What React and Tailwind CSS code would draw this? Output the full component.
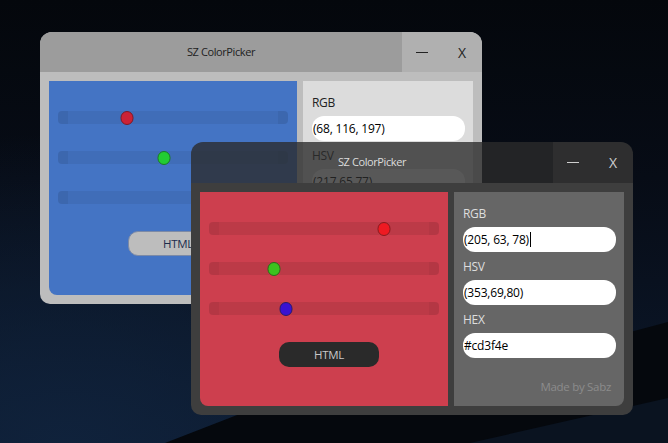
import React from "react";

// one slider groove with its knob; left = knob centre in px from groove start
function Slider({ left, groove, cap, knob }) {
  return (
    <div className={`relative h-[13px] rounded-[4px] flex justify-between ${groove}`}>
      <div className={`w-[10px] rounded-l-[4px] ${cap}`} />
      <div className={`w-[10px] rounded-r-[4px] ${cap}`} />
      <div
        className={`absolute top-1/2 -translate-y-1/2 -translate-x-1/2 w-[13px] h-[14px] rounded-full border ${knob}`}
        style={{ left }}
      />
    </div>
  );
}

function Field({ label, value, labelClass, caret }) {
  return (
    <>
      <div className={`h-[16px] leading-[16px] text-[12px] tracking-[-0.3px] ${labelClass}`}>{label}</div>
      <div className="mt-[5px] mr-[8px] h-[25px] rounded-[12px] bg-white flex items-center pl-[1px] text-[12px] tracking-[-0.2px] text-black">
        {value}
        {caret && <span className="ml-[1px] w-px h-[15px] bg-black" />}
      </div>
    </>
  );
}

function Wallpaper() {
  return (
    <svg className="absolute inset-0" width="668" height="443" viewBox="0 0 668 443">
      <defs>
        <linearGradient id="sky" x1="0" y1="0" x2="0" y2="1">
          <stop offset="0" stopColor="#04070c" />
          <stop offset="0.4" stopColor="#070c16" />
          <stop offset="1" stopColor="#0c192d" />
        </linearGradient>
        <radialGradient id="glow" cx="0.1" cy="1" r="0.7">
          <stop offset="0" stopColor="#10233d" stopOpacity="0.9" />
          <stop offset="1" stopColor="#10233d" stopOpacity="0" />
        </radialGradient>
      </defs>
      <rect width="668" height="443" fill="url(#sky)" />
      <rect width="668" height="443" fill="url(#glow)" />
      <polygon points="165,443 250,410 450,380 668,322 668,443" fill="#05080d" />
      <polygon points="470,443 668,398 668,443" fill="#0a1320" />
    </svg>
  );
}

export default function App() {
  return (
    <div className="relative w-[668px] h-[443px] overflow-hidden bg-[#05080e] font-['Open_Sans',sans-serif]">
      <Wallpaper />

      {/* back window: light theme, blue */}
      <div className="absolute left-[40px] top-[32px] w-[442px] h-[272px] rounded-t-[12px] rounded-b-[10px] overflow-hidden bg-[#bdbdbd] flex flex-col">
        <div className="h-[40px] flex">
          <div className="flex-1 bg-[#9c9c9c] flex items-center justify-center text-[11px] tracking-[-0.4px] text-[#222]">
            SZ ColorPicker
          </div>
          <div className="w-[80px] bg-[#b0b0b0] flex text-[#222]">
            <div className="w-[40px] flex items-center justify-center">
              <span className="w-[12px] h-px bg-[#222]" />
            </div>
            <div className="w-[40px] flex items-center justify-center text-[14px]">X</div>
          </div>
        </div>
        <div className="flex-1 p-[9px] flex gap-[6px]">
          <div className="w-[248px] rounded-bl-[8px] bg-[#4474c4] px-[9px] pt-[30px] flex flex-col">
            <Slider left={69} groove="bg-black/[0.06]" cap="bg-black/[0.05]" knob="bg-[#cc2236] border-[#7d1a26]" />
            <div className="mt-[27px]">
              <Slider left={106} groove="bg-black/[0.06]" cap="bg-black/[0.05]" knob="bg-[#22cc33] border-[#1a7a25]" />
            </div>
            <div className="mt-[27px]">
              <Slider left={205} groove="bg-black/[0.06]" cap="bg-black/[0.05]" knob="bg-[#2a22cc] border-[#1a1a7a]" />
            </div>
            <button className="mt-[27px] ml-[70px] w-[100px] h-[25px] rounded-[10px] border border-[#7c8aa6] bg-[#bdbdbd] text-[11.5px] tracking-[-0.3px] text-[#1c2c4c]">
              HTML
            </button>
          </div>
          <div className="flex-1 rounded-br-[8px] bg-[#dcdcdc] pl-[9px] pt-[14px] flex flex-col">
            <Field label="RGB" value="(68, 116, 197)" labelClass="text-[#222]" />
            <div className="mt-[7px]" />
            <Field label="HSV" value="(217,65,77)" labelClass="text-[#222]" />
          </div>
        </div>
      </div>

      {/* front window: dark theme, red */}
      <div className="absolute left-[191px] top-[142px] w-[442px] h-[273px] rounded-t-[12px] rounded-b-[10px] overflow-hidden flex flex-col">
        <div className="h-[41px] flex">
          <div className="flex-1 bg-[#2b2b2b]/[0.79] flex items-center justify-center text-[11px] tracking-[-0.4px] text-[#dcdcdc]">
            SZ ColorPicker
          </div>
          <div className="w-[80px] bg-[#303030]/[0.95] flex text-[#cfcfcf]">
            <div className="w-[40px] flex items-center justify-center">
              <span className="w-[12px] h-px bg-[#cfcfcf]" />
            </div>
            <div className="w-[40px] flex items-center justify-center text-[14px]">X</div>
          </div>
        </div>
        <div className="flex-1 bg-[#3e3e3e] p-[9px] flex gap-[6px]">
          <div className="w-[248px] rounded-bl-[8px] bg-[#cd3f4e] px-[9px] pt-[30px] flex flex-col">
            <Slider left={175} groove="bg-black/[0.08]" cap="bg-black/[0.04]" knob="bg-[#ee1a22] border-[#8a1a1e]" />
            <div className="mt-[27px]">
              <Slider left={65} groove="bg-black/[0.08]" cap="bg-black/[0.04]" knob="bg-[#3cc21e] border-[#2a6a1a]" />
            </div>
            <div className="mt-[27px]">
              <Slider left={77} groove="bg-black/[0.08]" cap="bg-black/[0.04]" knob="bg-[#3a12d2] border-[#2a1a6a]" />
            </div>
            <button className="mt-[27px] ml-[70px] w-[100px] h-[25px] rounded-[10px] bg-[#2a2a2a] text-[11.5px] tracking-[-0.3px] text-[#c8c8c8]">
              HTML
            </button>
          </div>
          <div className="flex-1 rounded-br-[8px] bg-[#666666] pl-[9px] pt-[14px] flex flex-col">
            <Field label="RGB" value="(205, 63, 78)" labelClass="text-[#dedede]" caret />
            <div className="mt-[7px]" />
            <Field label="HSV" value="(353,69,80)" labelClass="text-[#dedede]" />
            <div className="mt-[7px]" />
            <Field label="HEX" value="#cd3f4e" labelClass="text-[#dedede]" />
            <div className="mt-auto mb-[11px] mr-[13px] text-right text-[11.5px] tracking-[-0.3px] leading-[16px] text-[#8c8c8c]">
              Made by Sabz
            </div>
          </div>
        </div>
      </div>
    </div>
  );
}
